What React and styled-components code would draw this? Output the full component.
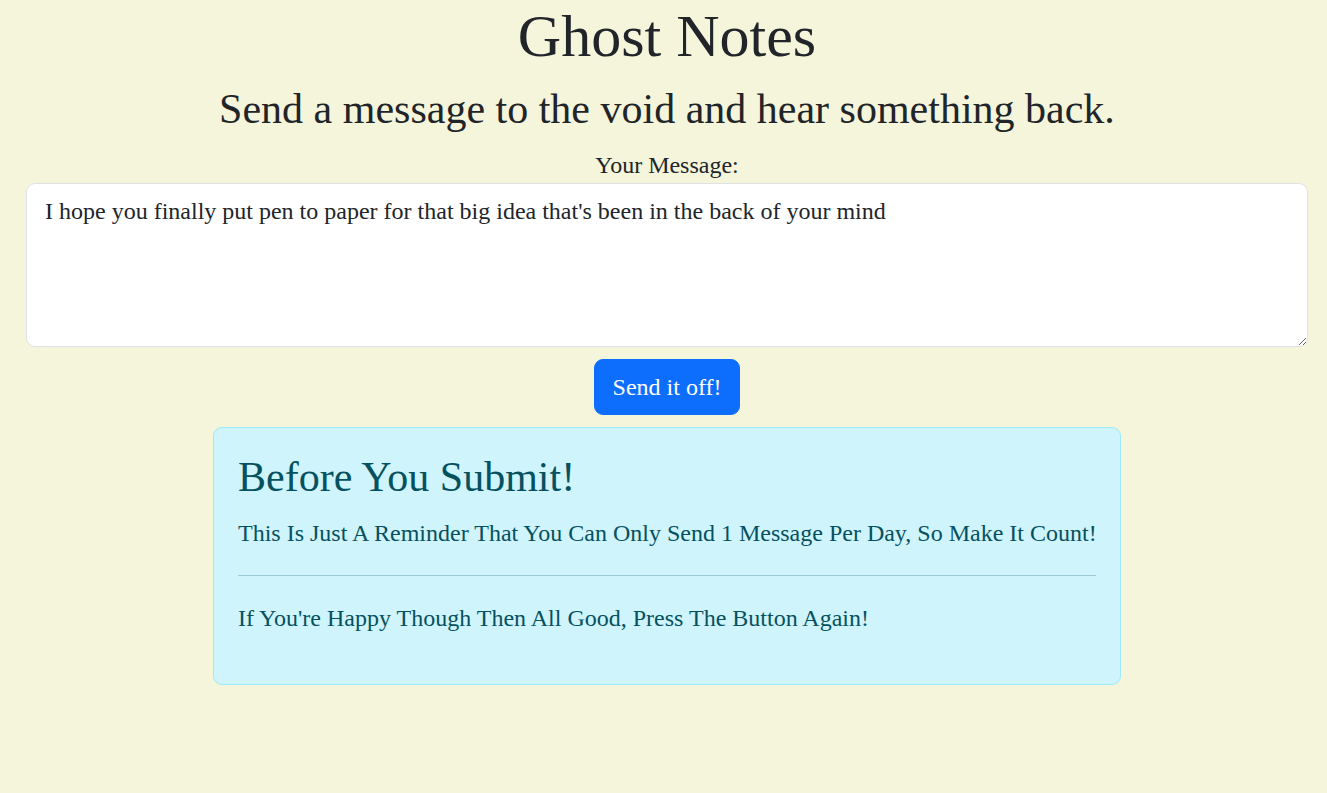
import React from "react";
import styled, { createGlobalStyle } from "styled-components";

const Global = createGlobalStyle`
  *, *::before, *::after { box-sizing: border-box; }
  html, body { margin: 0; padding: 0; }
  body {
    background: #f5f5dc;
    color: #212529;
    font-family: "Liberation Serif", "Times New Roman", serif;
    font-size: 24px;
    line-height: 1.5;
  }
`;

const Page = styled.main`
  display: flex;
  flex-direction: column;
  align-items: center;
  padding: 0 19px 40px 26px;
  text-align: center;
`;

const Title = styled.h1`
  margin: 0 0 12px;
  font-size: 60px;
  font-weight: 400;
  line-height: 1.2;
`;

const Subtitle = styled.h3`
  margin: 0 0 13px;
  font-size: 42px;
  font-weight: 400;
  line-height: 1.2;
`;

const Label = styled.label`
  display: block;
  font-size: 24px;
  line-height: 1.5;
`;

const MessageBox = styled.textarea`
  display: block;
  width: 100%;
  height: 164px;
  padding: 9px 18px;
  font-family: inherit;
  font-size: 24px;
  line-height: 1.5;
  color: #212529;
  background: #fff;
  border: 1px solid #dee2e6;
  border-radius: 9px;
  resize: vertical;
  outline: none;
`;

const SendButton = styled.button`
  margin-top: 12px;
  padding: 9px 18px;
  font-family: inherit;
  font-size: 24px;
  line-height: 1.5;
  color: #fff;
  background: #0d6efd;
  border: 1px solid #0d6efd;
  border-radius: 9px;
  cursor: pointer;
`;

const Alert = styled.section`
  width: 908px;
  margin-top: 12px;
  padding: 24px;
  text-align: left;
  color: #055160;
  background: #cff4fc;
  border: 1px solid #9eeaf9;
  border-radius: 9px;
`;

const AlertHeading = styled.h4`
  margin: 0 0 12px;
  font-size: 42px;
  font-weight: 400;
  line-height: 1.2;
`;

const AlertText = styled.p`
  margin: 0 0 24px;
  font-size: 24px;
  line-height: 36px;
  white-space: nowrap;
`;

const Divider = styled.hr`
  margin: 24px 0;
  border: 0;
  border-top: 1px solid #055160;
  opacity: 0.25;
`;

export default function App() {
  return (
    <>
      <Global />
      <Page>
        <Title>Ghost Notes</Title>
        <Subtitle>Send a message to the void and hear something back.</Subtitle>
        <Label htmlFor="msg">Your Message:</Label>
        <MessageBox
          id="msg"
          defaultValue="I hope you finally put pen to paper for that big idea that's been in the back of your mind"
        />
        <SendButton type="button">Send it off!</SendButton>
        <Alert>
          <AlertHeading>Before You Submit!</AlertHeading>
          <AlertText>
            This Is Just A Reminder That You Can Only Send 1 Message Per Day, So Make It Count!
          </AlertText>
          <Divider />
          <AlertText>If You're Happy Though Then All Good, Press The Button Again!</AlertText>
        </Alert>
      </Page>
    </>
  );
}
